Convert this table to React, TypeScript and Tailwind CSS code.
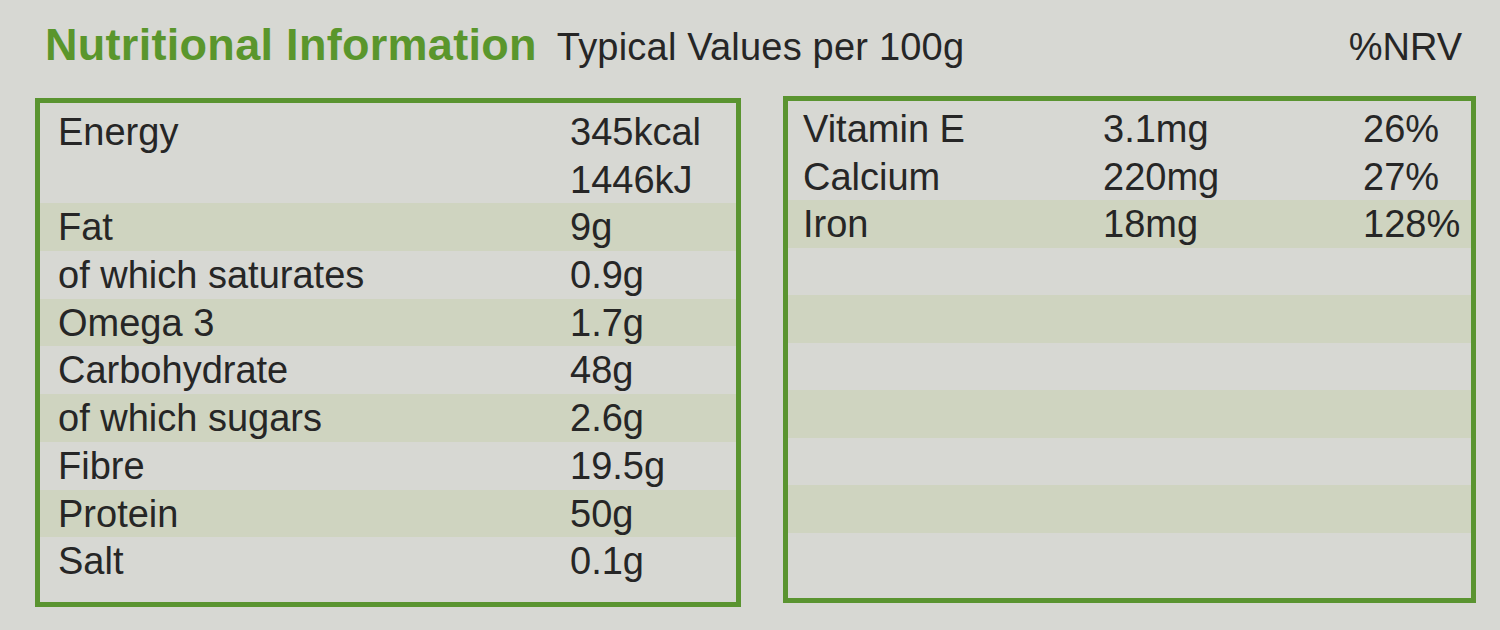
import React from 'react';

const left = [
  { label: 'Energy', value: '345kcal', tint: false },
  { label: '', value: '1446kJ', tint: false },
  { label: 'Fat', value: '9g', tint: true },
  { label: 'of which saturates', value: '0.9g', tint: false },
  { label: 'Omega 3', value: '1.7g', tint: true },
  { label: 'Carbohydrate', value: '48g', tint: false },
  { label: 'of which sugars', value: '2.6g', tint: true },
  { label: 'Fibre', value: '19.5g', tint: false },
  { label: 'Protein', value: '50g', tint: true },
  { label: 'Salt', value: '0.1g', tint: false },
];

const right = [
  { label: 'Vitamin E', value: '3.1mg', nrv: '26%' },
  { label: 'Calcium', value: '220mg', nrv: '27%' },
  { label: 'Iron', value: '18mg', nrv: '128%' },
  { label: '', value: '', nrv: '' },
  { label: '', value: '', nrv: '' },
  { label: '', value: '', nrv: '' },
  { label: '', value: '', nrv: '' },
  { label: '', value: '', nrv: '' },
  { label: '', value: '', nrv: '' },
  { label: '', value: '', nrv: '' },
];

export default function App() {
  return (
    <div className="w-[1500px] h-[630px] overflow-hidden bg-[#d7d8d3] text-[#262626] font-['Liberation_Sans',Arial,sans-serif]">
      {/* heading */}
      <div className="flex items-baseline h-[74px] pt-[19px] pl-[45px] pr-[38px]">
        <h1 className="text-[45px] leading-[52px] font-bold text-[#5a962c] tracking-[0.3px]">Nutritional Information</h1>
        <span className="ml-[20px] text-[38px] leading-[52px] tracking-[0.2px]">Typical Values per 100g</span>
        <span className="ml-auto text-[38px] leading-[52px]">%NRV</span>
      </div>

      <div className="flex items-start gap-[42px] pl-[35px] pt-[22px] text-[38px] leading-[48px]">
        {/* left table */}
        <div className="mt-[2px] w-[706px] h-[509px] border-[5px] border-[#5a9430] pt-[5px]">
          {left.map((r, i) => (
            <div key={i} className={`flex h-[47.7px] pl-[18px] ${r.tint ? 'bg-[#cfd4c0]' : ''}`}>
              <span className="w-[512px]">{r.label}</span>
              <span>{r.value}</span>
            </div>
          ))}
        </div>

        {/* right table */}
        <div className="w-[693px] h-[507px] border-[5px] border-[#5a9430] pt-[4px]">
          {right.map((r, i) => (
            <div key={i} className={`flex h-[47.5px] pl-[15px] ${i % 2 === 0 && i > 0 ? 'bg-[#cfd4c0]' : ''}`}>
              <span className="w-[300px]">{r.label}</span>
              <span className="w-[260px]">{r.value}</span>
              <span>{r.nrv}</span>
            </div>
          ))}
        </div>
      </div>
    </div>
  );
}
